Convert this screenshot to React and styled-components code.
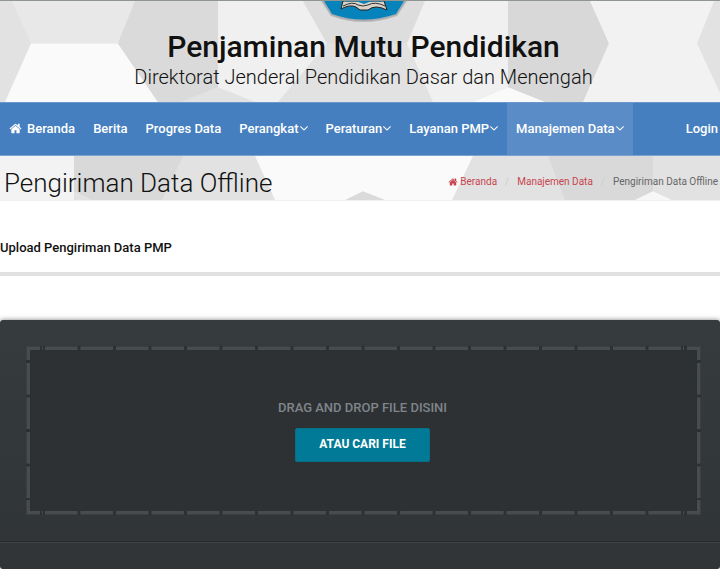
import styled, { createGlobalStyle } from "styled-components";

const GlobalStyle = createGlobalStyle`
  * {
    box-sizing: border-box;
  }
  body {
    margin: 0;
    background: #fff;
    color: #111;
    font-family: Roboto, "Liberation Sans", sans-serif;
    overflow-x: hidden;
  }
  h1, h2, h3, p {
    margin: 0;
    font-weight: 400;
  }
  a {
    text-decoration: none;
  }
`;

const Header = styled.header`
  position: relative;
  overflow: hidden;
  padding: 29px 0 12px 7px;
  border-top: 1px solid #8f9691;
  text-align: center;
`;

const Pattern = styled.svg`
  position: absolute;
  inset: 0;
  z-index: -1;
  width: 100%;
  height: 100%;
`;

const Crest = styled.svg`
  position: absolute;
  top: 0;
  left: calc(50% - 40px);
  width: 88px;
  height: 24px;
`;

const SiteName = styled.h1`
  font-size: 30px;
  line-height: 34px;
  font-weight: 500;
`;

const SiteOwner = styled.p`
  font-size: 20px;
  line-height: 26px;
  font-weight: 300;
`;

const Nav = styled.nav`
  display: flex;
  justify-content: space-between;
  height: 54px;
  background: #457fc0;
  border-top: 1px solid #6b98cc;
  border-bottom: 1px solid #7ba2d0;
`;

const Menu = styled.div`
  display: flex;
`;

const MenuLink = styled.a`
  display: flex;
  align-items: center;
  gap: ${(p) => (p.$wide ? "5px" : "1px")};
  padding: 0 9px 2px;
  color: #fff;
  background: ${(p) => (p.$active ? "#5a8cc7" : "transparent")};
  font-size: 13px;
  font-weight: 500;
  white-space: nowrap;
`;

const LoginLink = styled(MenuLink)`
  padding-right: 2px;
`;

const Icon = styled.svg`
  width: ${(p) => p.$size}px;
  height: ${(p) => p.$size}px;
  fill: currentColor;
`;

const TitleBar = styled.section`
  position: relative;
  display: flex;
  align-items: center;
  justify-content: space-between;
  padding: 10px 2px 0 4px;
  border-bottom: 1px solid #f1f1f1;
`;

const PageTitle = styled.h2`
  font-size: 26px;
  line-height: 34px;
  font-weight: 300;
`;

const Crumbs = styled.div`
  display: flex;
  gap: 8px;
  padding-bottom: 2px;
  color: #666;
  font-size: 10px;
  line-height: 16px;
`;

const CrumbLink = styled.a`
  display: flex;
  align-items: center;
  gap: 2px;
  color: #c7454f;
`;

const Slash = styled.span`
  color: #ccc;
`;

const Heading = styled.h3`
  padding: 37px 0 14px;
  border-bottom: 4px solid #e1e1e1;
  font-size: 13px;
  line-height: 20px;
  font-weight: 500;
`;

const Uploader = styled.div`
  margin-top: 44px;
  padding: 26px 19px 26px 26px;
  border-radius: 3px;
  background: linear-gradient(#363b3d, #303436);
  box-shadow: 0 0 5px rgba(0, 0, 0, 0.5);
`;

const DropZone = styled.div`
  position: relative;
  display: flex;
  flex-direction: column;
  align-items: center;
  gap: 10px;
  padding: 52px 2px 53px 0;
  background: #2e3134;
`;

const Dashes = styled.svg`
  position: absolute;
  inset: 0;
  width: 100%;
  height: 100%;
  fill: none;
  pointer-events: none;
`;

const DropText = styled.p`
  color: #7f858a;
  font-size: 13px;
  line-height: 20px;
  font-weight: 500;
`;

const BrowseButton = styled.button`
  height: 34px;
  padding: 0 23px 2px;
  border: 1px solid #067089;
  border-radius: 2px;
  background: #007a96;
  color: #fff;
  font: 700 12px Roboto, sans-serif;
`;

const UploaderLine = styled.hr`
  margin: 26px -19px 0 -26px;
  border: 0;
  border-top: 1px solid #282b2d;
  border-bottom: 1px solid #3e4245;
`;

const headerShapes = [
  ["#e8e8e8", "12,0 135,0 118,43 31,43"],
  ["#fafafa", "31,43 118,43 158,102 5,102"],
  ["#dadada", "135,0 218,0 218,87 180,102 158,102 118,43"],
  ["#f0f0f0", "218,0 303,0 327,43 278,102 255,102 218,87"],
  ["#dddddd", "303,0 425,0 407,43 327,43"],
  ["#f0f0f0", "425,0 508,0 508,87 473,102 433,102 407,43"],
  ["#d8d8d8", "508,0 590,0 609,43 583,102 545,102 508,87"],
  ["#fafafa", "473,102 508,87 545,102"],
  ["#f2f2f2", "590,0 714,0 697,43 720,93 720,102 583,102 609,43"],
];

const titleShapes = [
  ["#f3f3f3", "0,0 74,0 74,45 0,45"],
  ["#d9d9d9", "74,0 183,0 162,45 92,45 74,36"],
  ["#fafafa", "255,0 473,0 452,45 275,45"],
  ["#dadada", "345,45 363,36 385,45"],
  ["#d9d9d9", "548,0 653,0 653,36 635,45 565,45"],
  ["#f7f7f7", "635,45 653,36 672,45"],
];

const menu = [
  { label: "Beranda", home: true },
  { label: "Berita" },
  { label: "Progres Data" },
  { label: "Perangkat", drop: true },
  { label: "Peraturan", drop: true },
  { label: "Layanan PMP", drop: true },
  { label: "Manajemen Data", drop: true, active: true },
];

const HomeIcon = ({ size }) => (
  <Icon $size={size} viewBox="0 0 1792 1792">
    <path d="M1472 992v480q0 26-19 45t-45 19h-384v-384h-256v384h-384q-26 0-45-19t-19-45v-480q0-1 .5-3t.5-3l575-474 575 474q1 2 1 6zm223-69l-62 74q-8 9-21 11h-3q-13 0-21-7l-692-577-692 577q-12 8-24 7-13-2-21-11l-62-74q-8-10-7-23.5t11-21.5l719-599q32-26 76-26t76 26l244 204v-195q0-14 9-23t23-9h192q14 0 23 9t9 23v408l219 182q10 8 11 21.5t-7 23.5z" />
  </Icon>
);

const DownIcon = () => (
  <Icon $size={8} viewBox="384 384 1024 1024">
    <path d="M1395 736q0 13-10 23l-466 466q-10 10-23 10t-23-10l-466-466q-10-10-10-23t10-23l50-50q10-10 23-10t23 10l393 393 393-393q10-10 23-10t23 10l50 50q10 10 10 23z" />
  </Icon>
);

const Backdrop = ({ shapes, height }) => (
  <Pattern viewBox={`0 0 720 ${height}`} preserveAspectRatio="none">
    <rect width="720" height={height} fill="#e2e2e2" />
    {shapes.map(([fill, points]) => (
      <polygon key={points} fill={fill} points={points} />
    ))}
  </Pattern>
);

const Logo = () => (
  <Crest viewBox="0 0 88 24">
    <path d="M1 0 L11 15 Q43 27 77 15 L87 0Z" fill="#888" opacity=".4" />
    <path d="M2 0 L11 14 Q43 26 77 14 L86 0Z" fill="#a9adaf" />
    <path d="M4 0 L12 13 Q43 24 76 13 L84 0Z" fill="#0783bb" />
    <path
      d="M23 0 L21 8 Q30 3 36 6 L40 9 L48 9 Q55 3 67 9 L64 0Z"
      fill="#d9d3ca"
      stroke="#222"
    />
    <path d="M23 5 Q33 0 38 4 Q43 6 48 4 Q55 0 65 5" fill="none" stroke="#333" />
    <path d="M26 0 L62 0 L61 1 Q52 -1 44 3 Q36 -1 27 1Z" fill="#0783bb" />
  </Crest>
);

// one pass of the dashed frame, "at" is the centre of the stroke
const Frame = ({ at, width, color }) => {
  const right = 674 - at;
  const bottom = 168 - at;
  return (
    <g stroke={color} strokeWidth={width}>
      <path d={`M${at} 14V${at}H14 M660 ${at}H${right}V14`} />
      <path d={`M${at} 153V${bottom}H14 M660 ${bottom}H${right}V153`} />
      {[at, bottom].map((y) => (
        <g key={y}>
          <path d={`M16 ${y}h1 M656 ${y}h1`} />
          <path d={`M19 ${y}H654`} pathLength="627" strokeDasharray="32 3" />
        </g>
      ))}
      {[at, right].map((x) => (
        <path key={x} d={`M${x} 17V151`} pathLength="137" strokeDasharray="32 3" />
      ))}
    </g>
  );
};

export default function App() {
  return (
    <>
      <GlobalStyle />
      <Header>
        <Backdrop shapes={headerShapes} height={102} />
        <Logo />
        <SiteName>Penjaminan Mutu Pendidikan</SiteName>
        <SiteOwner>Direktorat Jenderal Pendidikan Dasar dan Menengah</SiteOwner>
      </Header>
      <Nav>
        <Menu>
          {menu.map((m) => (
            <MenuLink key={m.label} href="#" $active={m.active} $wide={m.home}>
              {m.home && <HomeIcon size={13} />}
              {m.label}
              {m.drop && <DownIcon />}
            </MenuLink>
          ))}
        </Menu>
        <LoginLink href="#">Login</LoginLink>
      </Nav>
      <TitleBar>
        <Backdrop shapes={titleShapes} height={45} />
        <PageTitle>Pengiriman Data Offline</PageTitle>
        <Crumbs>
          <CrumbLink href="#">
            <HomeIcon size={10} />
            Beranda
          </CrumbLink>
          <Slash>/</Slash>
          <CrumbLink href="#">Manajemen Data</CrumbLink>
          <Slash>/</Slash>
          <span>Pengiriman Data Offline</span>
        </Crumbs>
      </TitleBar>
      <Heading>Upload Pengiriman Data PMP</Heading>
      <Uploader>
        <DropZone>
          <Dashes viewBox="0 0 674 168" preserveAspectRatio="none">
            <Frame at={2} width={4} color="#3b3f42" />
            <Frame at={2.5} width={3} color="#484c4f" />
          </Dashes>
          <DropText>DRAG AND DROP FILE DISINI</DropText>
          <BrowseButton type="button">ATAU CARI FILE</BrowseButton>
        </DropZone>
        <UploaderLine />
      </Uploader>
    </>
  );
}
